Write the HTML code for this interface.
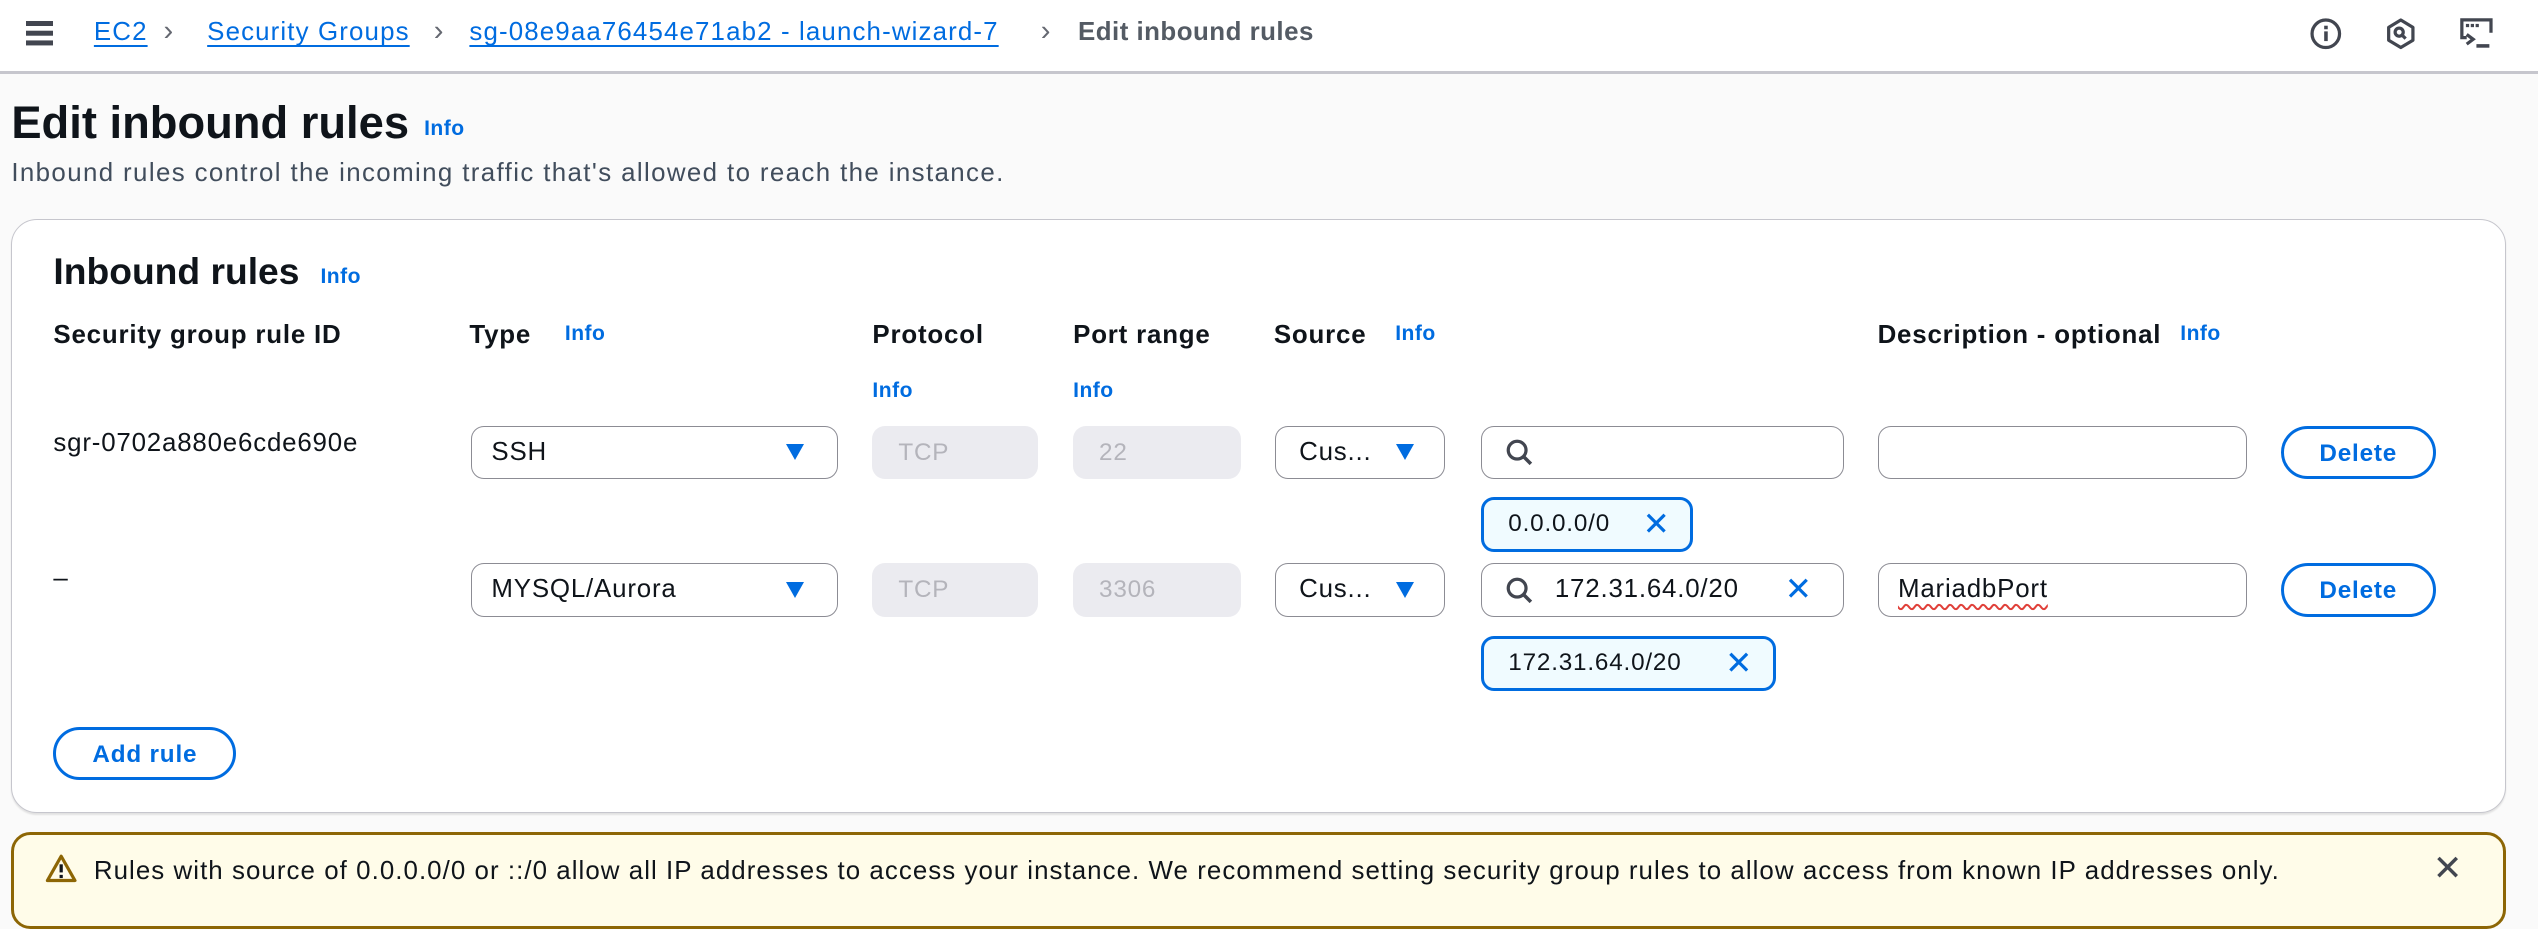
<!DOCTYPE html>
<html><head><meta charset="utf-8"><style>
html,body{margin:0;padding:0}
body{width:1568px;height:549px;zoom:1.6186;background:#fafafa;font-family:"Liberation Sans",Arial,sans-serif;color:#0f141a;overflow:hidden;position:relative;letter-spacing:0.5px}
.a{position:absolute}
.hdr{left:0;top:0;width:1568px;height:44px;background:#fff;border-bottom:2px solid #c6c6cd}
.bc{top:10px;font-size:16px;line-height:20px;color:#006ce0;text-decoration:underline;text-underline-offset:3px;text-decoration-thickness:1.5px;letter-spacing:0.7px}
.chev{top:9px;font-size:18px;color:#656871}
.info{color:#006ce0;font-weight:bold;font-size:13px;letter-spacing:0.3px}
.th{top:197px;font-size:16px;font-weight:bold;line-height:20px;letter-spacing:0.5px}
.box{border:1px solid #8c8c94;border-radius:8px;background:#fff;box-sizing:border-box;height:33px}
.dis{background:#ebebf0;border-radius:8px;height:33px;color:#b4b4bb;font-size:15px;line-height:33px;padding-left:16px;box-sizing:border-box}
.txt{font-size:16px;line-height:31px;padding-left:12px}
.tri{width:0;height:0;border-left:6px solid transparent;border-right:6px solid transparent;border-top:10px solid #006ce0;top:11px}
.btn{border:2px solid #006ce0;border-radius:18px;color:#006ce0;font-weight:bold;font-size:15px;text-align:center;box-sizing:border-box;height:33px;line-height:31px;background:#fff}
.tok{border:2px solid #006ce0;border-radius:8px;background:#f0fbff;box-sizing:border-box;height:34px;font-size:15px;line-height:30px;padding-left:15px}
.x{color:#006ce0;font-size:20px}
</style></head><body>
<div class="a hdr"></div>
<div class="a" style="left:16px;top:13px;width:17px;height:3px;background:#424650;box-shadow:0 6px 0 #424650,0 12px 0 #424650"></div>
<div class="a bc" style="left:58px">EC2</div>
<div class="a chev" style="left:101px">&#x203A;</div>
<div class="a bc" style="left:128px">Security Groups</div>
<div class="a chev" style="left:268px">&#x203A;</div>
<div class="a bc" style="left:290px">sg-08e9aa76454e71ab2 - launch-wizard-7</div>
<div class="a chev" style="left:643px">&#x203A;</div>
<div class="a" style="left:666px;top:10px;font-size:16px;line-height:20px;font-weight:bold;color:#545b64;letter-spacing:0.3px">Edit inbound rules</div>
<svg class="a" style="left:1426px;top:10px" width="22" height="22" viewBox="0 0 22 22"><circle cx="11" cy="11" r="8.5" fill="none" stroke="#424650" stroke-width="2"/><rect x="10" y="9.5" width="2.2" height="6" fill="#424650"/><rect x="10" y="6" width="2.2" height="2.2" fill="#424650"/></svg>
<svg class="a" style="left:1472px;top:10px" width="22" height="22" viewBox="0 0 22 22"><path d="M11 2.5L18.5 7v8L11 19.5 3.5 15V7z" fill="none" stroke="#424650" stroke-width="2" stroke-linejoin="round"/><circle cx="10" cy="10" r="2.5" fill="none" stroke="#424650" stroke-width="2"/><path d="M11.5 11.5L14 14" stroke="#424650" stroke-width="2"/></svg>
<svg class="a" style="left:1518px;top:9px" width="24" height="24" viewBox="0 0 24 24"><path d="M6 14H3V3h18v8" fill="none" stroke="#424650" stroke-width="2"/><rect x="5.5" y="5.5" width="2" height="2" fill="#424650"/><rect x="8.5" y="5.5" width="2" height="2" fill="#424650"/><rect x="11.5" y="5.5" width="2" height="2" fill="#424650"/><path d="M6 12l4 3-4 3" fill="none" stroke="#424650" stroke-width="2"/><rect x="12" y="18" width="8" height="2.2" fill="#424650"/></svg>

<div class="a" style="left:7px;top:58px;font-size:28px;font-weight:bold;line-height:36px;letter-spacing:0">Edit inbound rules</div>
<div class="a info" style="left:262px;top:72px">Info</div>
<div class="a" style="left:7px;top:97px;font-size:16px;line-height:20px;color:#414d5c;letter-spacing:0.85px">Inbound rules control the incoming traffic that's allowed to reach the instance.</div>

<div class="a" style="left:7px;top:135px;width:1541px;height:367px;box-sizing:border-box;border:1px solid #c6c6cd;border-radius:16px;background:#fff;box-shadow:0 1px 1px rgba(0,0,0,.1)"></div>
<div class="a" style="left:33px;top:154px;font-size:23px;font-weight:bold;line-height:28px;letter-spacing:0">Inbound rules</div>
<div class="a info" style="left:198px;top:164px">Info</div>

<div class="a th" style="left:33px">Security group rule ID</div>
<div class="a th" style="left:290px">Type</div><div class="a info" style="left:349px;top:199px">Info</div>
<div class="a th" style="left:539px">Protocol</div><div class="a info" style="left:539px;top:234px">Info</div>
<div class="a th" style="left:663px">Port range</div><div class="a info" style="left:663px;top:234px">Info</div>
<div class="a th" style="left:787px">Source</div><div class="a info" style="left:862px;top:199px">Info</div>
<div class="a th" style="left:1160px">Description - optional</div><div class="a info" style="left:1347px;top:199px">Info</div>

<!-- row 1 -->
<div class="a" style="left:33px;top:264px;font-size:16px;line-height:20px">sgr-0702a880e6cde690e</div>
<div class="a box txt" style="left:291px;top:263px;width:227px">SSH<div class="a tri" style="left:194px"></div></div>
<div class="a dis" style="left:539px;top:263px;width:102px">TCP</div>
<div class="a dis" style="left:663px;top:263px;width:104px">22</div>
<div class="a box txt" style="left:788px;top:263px;width:105px;padding-left:14px">Cus...<div class="a tri" style="left:74px"></div></div>
<div class="a box" style="left:915px;top:263px;width:224px"><svg class="a" style="left:14px;top:7px" width="18" height="18" viewBox="0 0 18 18"><circle cx="7.5" cy="7.5" r="5.5" fill="none" stroke="#424650" stroke-width="2"/><path d="M11.5 11.5L16 16" stroke="#424650" stroke-width="2.2"/></svg></div>
<div class="a box" style="left:1160px;top:263px;width:228px"></div>
<div class="a btn" style="left:1409px;top:263px;width:96px">Delete</div>
<div class="a tok" style="left:915px;top:307px;width:131px">0.0.0.0/0<span class="a x" style="left:98px;top:0">&#x2715;</span></div>

<!-- row 2 -->
<div class="a" style="left:33px;top:347px;font-size:16px;line-height:20px">–</div>
<div class="a box txt" style="left:291px;top:348px;width:227px">MYSQL/Aurora<div class="a tri" style="left:194px"></div></div>
<div class="a dis" style="left:539px;top:348px;width:102px">TCP</div>
<div class="a dis" style="left:663px;top:348px;width:104px">3306</div>
<div class="a box txt" style="left:788px;top:348px;width:105px;padding-left:14px">Cus...<div class="a tri" style="left:74px"></div></div>
<div class="a box txt" style="left:915px;top:348px;width:224px;padding-left:45px"><svg class="a" style="left:14px;top:7px" width="18" height="18" viewBox="0 0 18 18"><circle cx="7.5" cy="7.5" r="5.5" fill="none" stroke="#424650" stroke-width="2"/><path d="M11.5 11.5L16 16" stroke="#424650" stroke-width="2.2"/></svg>172.31.64.0/20<span class="a x" style="left:187px;top:0">&#x2715;</span></div>
<div class="a box txt" style="left:1160px;top:348px;width:228px"><span style="text-decoration:underline wavy #e0403a;text-decoration-thickness:1px;text-underline-offset:4px">MariadbPort</span></div>
<div class="a btn" style="left:1409px;top:348px;width:96px">Delete</div>
<div class="a tok" style="left:915px;top:393px;width:182px">172.31.64.0/20<span class="a x" style="left:149px;top:0">&#x2715;</span></div>

<div class="a btn" style="left:33px;top:449px;width:113px">Add rule</div>

<!-- warning -->
<div class="a" style="left:7px;top:514px;width:1541px;height:60px;box-sizing:border-box;border:2px solid #8d6605;border-radius:12px;background:#fffce9"></div>
<svg class="a" style="left:28px;top:527px" width="20" height="19" viewBox="0 0 20 19"><path d="M10 2L18.5 17H1.5z" fill="none" stroke="#8d6605" stroke-width="2" stroke-linejoin="round"/><rect x="9" y="7" width="2" height="5" fill="#0f141a"/><rect x="9" y="13.5" width="2" height="2" fill="#0f141a"/></svg>
<div class="a" style="left:58px;top:528px;font-size:16px;line-height:20px;letter-spacing:0.65px;white-space:nowrap">Rules with source of 0.0.0.0/0 or ::/0 allow all IP addresses to access your instance. We recommend setting security group rules to allow access from known IP addresses only.</div>
<div class="a" style="left:1503px;top:524px;font-size:22px;color:#424650">&#x2715;</div>
</body></html>
